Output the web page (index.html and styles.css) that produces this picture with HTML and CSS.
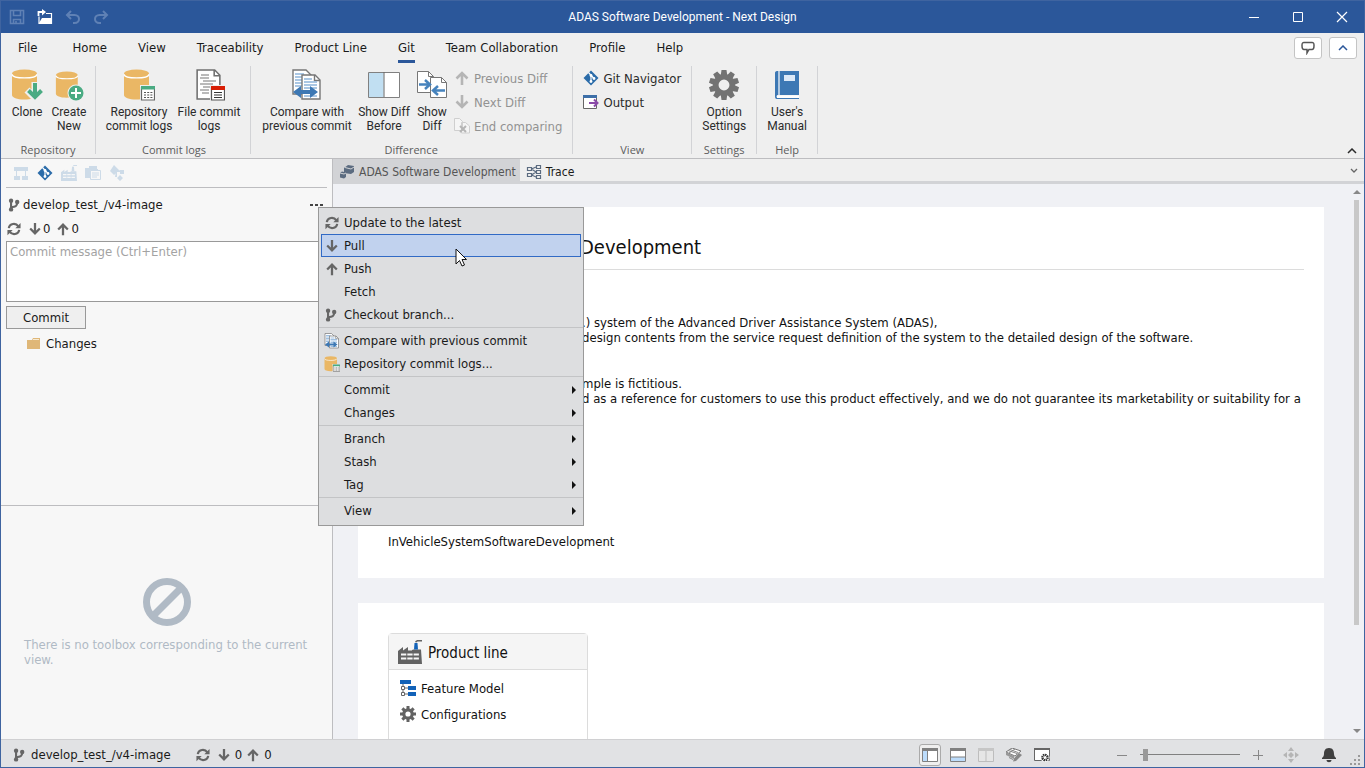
FILE: index.html
```html
<!DOCTYPE html>
<html lang="en">
<head>
<meta charset="utf-8">
<title>ADAS Software Development - Next Design</title>
<link rel="stylesheet" href="styles.css">
</head>
<body>
<svg class="defs" aria-hidden="true">
  <symbol id="db" viewBox="0 0 32 32"><path d="M1 6v20c0 2.500 5 4.500 12 4.500s13-2 13-4.500V6z" fill="#eab765"/><ellipse cx="13.500" cy="4.500" rx="12.500" ry="4" fill="#eab765"/><path d="M1 5.500C2 10 25 10 26 5.500" fill="none" stroke="#fff" stroke-width="1.300"/></symbol>
  <symbol id="page" viewBox="0 0 24 30"><path d="M1 1h17l5 5v23H1z" fill="#fff" stroke="#707070" stroke-width="1.500"/><path d="M17.500 1v5.500H23" fill="none" stroke="#707070" stroke-width="1.500"/></symbol>
  <symbol id="down" viewBox="0 0 16 16"><path d="M8 1v12M2.500 7.500L8 13l5.500-5.500" fill="none" stroke="currentColor" stroke-width="2.600"/></symbol>
  <symbol id="up" viewBox="0 0 16 16"><path d="M8 15V3M2.500 8.500L8 3l5.500 5.500" fill="none" stroke="currentColor" stroke-width="2.600"/></symbol>
  <symbol id="sync" viewBox="0 0 16 16"><path d="M2 7C3 1.500 10 .5 13 5M14 9C13 14.500 6 15.500 3 11" fill="none" stroke="currentColor" stroke-width="2.400"/><path d="M15.500 1v6h-6zM.5 15V9h6z" fill="currentColor"/></symbol>
  <symbol id="branch" viewBox="0 0 16 16"><path d="M3.500 3v10M3.500 10.500c5-.5 7-1 7-5.500" fill="none" stroke="currentColor" stroke-width="2.400"/><circle cx="3.500" cy="3" r="2.500" fill="currentColor"/><circle cx="3.500" cy="13" r="2.500" fill="currentColor"/><circle cx="10.500" cy="4.500" r="2.500" fill="currentColor"/></symbol>
  <symbol id="git" viewBox="0 0 16 16"><path d="M8 .5L15.500 8 8 15.500.5 8z" fill="#2b6ca9"/><path d="M5.500 2.500l5.500 6M8 5.500V12" stroke="#fff" stroke-width="1.200"/><circle cx="8" cy="5.500" r="1.400" fill="#fff"/><circle cx="8" cy="11.500" r="1.400" fill="#fff"/><circle cx="11" cy="8.500" r="1.400" fill="#fff"/></symbol>
  <symbol id="gear" viewBox="0 0 32 32"><g fill="currentColor"><path id="cog" d="M13.500 1h5l1 7h-7zM13.500 31h5l1-7h-7z"/><use href="#cog" transform="rotate(36 16 16)"/><use href="#cog" transform="rotate(72 16 16)"/><use href="#cog" transform="rotate(108 16 16)"/><use href="#cog" transform="rotate(144 16 16)"/></g><circle cx="16" cy="16" r="8.200" fill="none" stroke="currentColor" stroke-width="5.500"/></symbol>
  <symbol id="gear8" viewBox="0 0 16 16"><g fill="currentColor"><path id="tooth" d="M6.500 0h3v4h-3zM6.500 12h3v4h-3z"/><use href="#tooth" transform="rotate(45 8 8)"/><use href="#tooth" transform="rotate(90 8 8)"/><use href="#tooth" transform="rotate(135 8 8)"/></g><circle cx="8" cy="8" r="4.200" fill="none" stroke="currentColor" stroke-width="3.200"/></symbol>
  <symbol id="compare" viewBox="0 0 32 32"><path d="M2 1h13l5 5v19H2z" fill="#fff" stroke="#777" stroke-width="1.400"/><path d="M4 5h9M4 8h13M4 11h13M4 14h13M4 17h9" stroke="#8fb5dc" stroke-width="1.700"/><path d="M11 6h13l5 5v19H11z" fill="#fff" stroke="#777" stroke-width="1.400"/><path d="M23.500 6v5.500H29" fill="none" stroke="#777" stroke-width="1.400"/><path d="M13 10h8M13 13h13M13 16h13M13 19h13M13 27h13" stroke="#8fb5dc" stroke-width="1.700"/><path d="M2 23l8-6v4h9v-4l8 6-8 6v-4h-9v4z" fill="#3d78b4"/></symbol>
  <symbol id="repolog" viewBox="0 0 32 32"><use href="#db" width="32" height="32"/><path d="M17 16h15v16H17z" fill="#efefef"/><path d="M18.500 18.500h13V31h-13z" fill="#fff" stroke="#666" stroke-width="1.200"/><path d="M18 17h14v3.500H18z" fill="#4aab83"/><path d="M21 23.500h9M21 26h9M21 28.500h9" stroke="#555" stroke-width="1.200" stroke-dasharray="2 1.200"/></symbol>
  <symbol id="factory" viewBox="0 0 24 24"><path d="M0 11l5-4v3.500l5-3.500v3.500h4V10l1.500-.5H23l1 14.500H0z" fill="currentColor"/><path d="M3 14.500h18M3 18.500h18" stroke="#f7f7f7" stroke-width="2" stroke-dasharray="5.300 1"/><path d="M16 9.500l.5-6.500h3l.5 6.500z" class="chimney"/><path d="M17.500 2l2-1.300H24" fill="none" stroke="currentColor" stroke-width="1.500"/></symbol>
  <symbol id="chevron" viewBox="0 0 10 6"><path d="M1 5l4-4 4 4" fill="none" stroke="currentColor" stroke-width="1.500"/></symbol>
</svg>
<div class="window">
  <header class="titlebar">
    <div class="quick">
      <button aria-label="Save" class="dim"><svg viewBox="0 0 16 16"><path d="M1.500 1.500h13v13h-13zM4.500 1.500v5h7v-5M4.500 14.500v-4h7v4M7 12v2" fill="none" stroke="currentColor" stroke-width="1.600"/></svg></button>
      <button aria-label="Open"><svg viewBox="0 0 16 16"><path d="M2 7.500v7h12.500V4.500H9" fill="none" stroke="#fff" stroke-width="1.200"/><path d="M2 14l3-5h9.500v5.500H2z" fill="#fff"/><path d="M1.500 7V3H6" fill="none" stroke="#fff" stroke-width="1.800"/><path d="M5 0l4 3-4 3.500z" fill="#fff"/></svg></button>
      <button aria-label="Undo" class="dim"><svg viewBox="0 0 16 16"><path d="M6 2L2 6l4 4M2 6h7.500c6 0 6 8 0 8H8" fill="none" stroke="currentColor" stroke-width="2"/></svg></button>
      <button aria-label="Redo" class="dim"><svg viewBox="0 0 16 16"><path d="M10 2l4 4-4 4M14 6H6.500c-6 0-6 8 0 8H8" fill="none" stroke="currentColor" stroke-width="2"/></svg></button>
    </div>
    <h1>ADAS Software Development - Next Design</h1>
    <div class="sys">
      <button aria-label="Minimize"><svg viewBox="0 0 12 12"><path d="M1 6.500h10" stroke="#fff"/></svg></button>
      <button aria-label="Maximize"><svg viewBox="0 0 12 12"><path d="M1.500 1.500h9v9h-9z" fill="none" stroke="#fff"/></svg></button>
      <button aria-label="Close"><svg viewBox="0 0 12 12"><path d="M1 1l10 10M11 1L1 11" stroke="#fff" stroke-width="1.200"/></svg></button>
    </div>
  </header>

  <nav class="tabs">
    <a href="#" class="file">File</a><a href="#">Home</a><a href="#">View</a><a href="#">Traceability</a><a href="#">Product Line</a><a href="#" class="on">Git</a><a href="#">Team Collaboration</a><a href="#">Profile</a><a href="#">Help</a>
    <div class="tabtools">
      <button aria-label="Feedback"><svg width="14" height="14" viewBox="0 0 14 14"><path d="M3 1.500h8c2 0 2 1 2 3s0 4-2 4H8L6 12V8.500H3c-2 0-2-2-2-4s0-3 2-3z" fill="none" stroke="#555" stroke-width="1.500"/></svg></button>
      <button aria-label="Collapse ribbon" class="blue"><svg width="10" height="6"><use href="#chevron"/></svg></button>
    </div>
  </nav>

  <div class="ribbon">
    <section class="group g-repo">
      <div class="cmds">
        <button class="big"><svg viewBox="0 0 32 32"><use href="#db" width="32" height="32"/><path d="M24 13v16M16 21l8 8 8-8" fill="none" stroke="#efefef" stroke-width="7"/><path d="M24 14v15M17.500 21.500L24 28l6.500-6.500" fill="none" stroke="#4aab83" stroke-width="4"/></svg>Clone</button>
        <button class="big"><svg viewBox="0 0 32 32"><use href="#db" x="2" y="1" width="28" height="30"/><circle cx="23" cy="24" r="8.500" fill="#efefef"/><circle cx="23" cy="24" r="7.500" fill="#4aab83"/><path d="M23 19v10M18 24h10" stroke="#fff" stroke-width="2"/></svg>Create<br>New</button>
      </div>
      <h2>Repository</h2>
    </section>
    <section class="group g-logs">
      <div class="cmds">
        <button class="big w70"><svg viewBox="0 0 32 32"><use href="#repolog"/></svg>Repository<br>commit logs</button>
        <button class="big w70"><svg viewBox="0 0 32 32"><use href="#page" x="3" y="0" width="25" height="31"/><path d="M8 6h8M7 9h9M10 12h13M7 15h13M10 18h8M7 21h9M9 24h7" stroke="#777" stroke-width="1.200"/><path d="M17 16h15v16H17z" fill="#efefef"/><path d="M18.500 18h13v13h-13z" fill="#fff" stroke="#555" stroke-width="1.200"/><path d="M18 17h14v4H18z" fill="#d81e05"/><path d="M21 23.500h8M21 26h8M21 28.500h8" stroke="#333" stroke-width="1.200"/></svg>File commit<br>logs</button>
      </div>
      <h2>Commit logs</h2>
    </section>
    <section class="group g-diff">
      <div class="cmds">
        <button class="big w94"><svg viewBox="0 0 32 32"><use href="#compare"/></svg>Compare with<br>previous commit</button>
        <button class="big w60"><svg viewBox="0 0 32 32"><path d="M.5 3.500h31v25H.5z" fill="#fff" stroke="#808080"/><path d="M1 4h14.500v24H1z" fill="#c1dff2"/><path d="M16 3v25" stroke="#666"/></svg>Show Diff<br>Before</button>
        <button class="big w36"><svg viewBox="0 0 32 32"><path d="M1.500 2.500h11l5 5v16h-16z" fill="#fff" stroke="#777"/><path d="M12.500 2.500v5h5" fill="none" stroke="#777"/><path d="M14.500 8.500h11l5 5v15h-16z" fill="#fff" stroke="#777"/><path d="M25.500 8.500v5h5" fill="none" stroke="#777"/><path d="M3 15.500h10M9 11l5 4.500L9 20M29 21.500H18M22 17l-5 4.500 5 4.500" fill="none" stroke="#4683bd" stroke-width="2.500"/></svg>Show<br>Diff</button>
        <div class="smalls off">
          <button class="small"><svg viewBox="0 0 16 16"><use href="#up"/></svg>Previous Diff</button>
          <button class="small"><svg viewBox="0 0 16 16"><use href="#down"/></svg>Next Diff</button>
          <button class="small"><svg viewBox="0 0 16 16"><path d="M.5.5h5l3 3v9h-8zM7.500 4.500h4l4 3.500v7h-8z" fill="#f5f5f5" stroke="#cfcfcf"/><path d="M6 8l6 6M12 8l-6 6" stroke="currentColor" stroke-width="2"/></svg>End comparing</button>
        </div>
      </div>
      <h2>Difference</h2>
    </section>
    <section class="group g-view">
      <div class="cmds">
        <div class="smalls">
          <button class="small"><svg viewBox="0 0 16 16"><use href="#git"/></svg>Git Navigator</button>
          <button class="small"><svg viewBox="0 0 16 16"><path d="M.5 1.500h13v13H.5z" fill="#fff" stroke="#666"/><path d="M0 1h14v3H0z" fill="#3d6fa8"/><path d="M6 9h8M11 5.500L14.500 9 11 12.500" fill="none" stroke="#8a4aa8" stroke-width="2"/></svg>Output</button>
        </div>
      </div>
      <h2>View</h2>
    </section>
    <section class="group g-opt">
      <div class="cmds"><button class="big"><svg viewBox="0 0 32 32" class="grey"><use href="#gear"/></svg>Option<br>Settings</button></div>
      <h2>Settings</h2>
    </section>
    <section class="group g-help">
      <div class="cmds"><button class="big"><svg viewBox="0 0 32 32"><path d="M6 2h22v24H7c-2 0-2 3 0 3h21v1H6c-2 0-2-2-2-3V4c0-1 .5-2 2-2z" fill="#3d78b4"/><path d="M8 2v24" stroke="#fff" stroke-width="1.200"/><path d="M6 26.500h22v2.500H6z" fill="#fff"/><path d="M13 6h11v6H13z" fill="#dce9f7"/></svg>User's<br>Manual</button></div>
      <h2>Help</h2>
    </section>
    <button class="fold" aria-label="Fold"><svg width="10" height="6"><use href="#chevron"/></svg></button>
  </div>

  <main class="body">
    <aside class="side">
      <div class="git">
        <div class="sidebar-icons">
          <svg viewBox="0 0 16 16"><path d="M1 2h14v4H1zM1 11h6v4H1zM9 11h6v4H9zM3 6h1v5H3zM12 6h1v5h-1z" fill="#cddbe8"/></svg>
          <svg viewBox="0 0 16 16"><use href="#git"/></svg>
          <svg viewBox="0 0 16 16" class="pale"><use href="#factory"/></svg>
          <svg viewBox="0 0 16 16"><path d="M0 3h4V1h8v3h1v9H0z" fill="#cddbe8"/><path d="M5.500 5.500h10v9h-10z" fill="#f7f7f7" stroke="#cddbe8"/><path d="M7 8h7M7 10h7M7 12h5" stroke="#cddbe8"/></svg>
          <svg viewBox="0 0 16 16"><path d="M5 0l5 5-5 5-4-4zM11 5h4v4h-4zM11 10l3 3-3 3-3-3zM7 6l5-1v2H8v5H6z" fill="#cddbe8"/></svg>
        </div>
        <div class="branchrow"><svg viewBox="0 0 16 16"><use href="#branch"/></svg><span>develop_test_/v4-image</span><button class="more" aria-label="More"><svg viewBox="0 0 14 4"><path d="M0 1h3v2H0zM5 1h3v2H5zM10 1h3v2h-3z" fill="#444"/></svg></button></div>
        <div class="syncrow"><svg viewBox="0 0 16 16" class="sy"><use href="#sync"/></svg><svg viewBox="0 0 16 16"><use href="#down"/></svg><span>0</span><svg viewBox="0 0 16 16" class="gap"><use href="#up"/></svg><span>0</span></div>
        <textarea aria-label="Commit message" placeholder="Commit message (Ctrl+Enter)"></textarea>
        <button class="commit">Commit</button>
        <div class="changes"><svg viewBox="0 0 14 12"><path d="M0 2h5l1-2h7v11H0z" fill="#dfb778"/><path d="M6 1.500h6" stroke="#f7ead2"/></svg>Changes</div>
      </div>
      <div class="toolbox">
        <svg viewBox="0 0 48 48"><circle cx="24" cy="24" r="20.500" fill="none" stroke="#b0bac5" stroke-width="7"/><path d="M10 38L38 10" stroke="#b0bac5" stroke-width="7"/></svg>
        <p>There is no toolbox corresponding to the current view.</p>
      </div>
    </aside>

    <section class="editor">
      <div class="doctabs">
        <a href="#" class="on"><svg viewBox="0 0 16 16"><path d="M5 4l4-3 6 1v6l-3 2-7-1z" fill="#5b6b80"/><path d="M6 3.500l6 1.500 3-2" fill="none" stroke="#d2d3d6"/><path d="M1 9l2-1.500 4 1V13l-2 1.500-4-1z" fill="#5b6b80"/><path d="M1 9l4 1 2-1" fill="none" stroke="#d2d3d6"/></svg>ADAS Software Development</a>
        <a href="#"><svg viewBox="0 0 16 16"><path d="M1.500 3.500h4v3h-4zM1.500 9.500h4v3h-4zM10.500 1.500h4v3h-4zM10.500 6.500h4v3h-4zM10.500 11.500h4v3h-4zM5.500 5L10 3M5.500 5L10 8M5.500 11L10 8M5.500 11l4.500 2" fill="none" stroke="#5b6b80" stroke-width="1.200"/></svg>Trace</a>
        <button aria-label="Tab list"><svg width="8" height="5" viewBox="0 0 8 5"><path d="M1 1l3 3 3-3" fill="none" stroke="currentColor" stroke-width="1.300"/></svg></button>
      </div>
      <div class="view">
        <div class="pages">
          <article class="card intro">
            <h2>Development</h2>
            <p><span class="lead"></span>.) system of the Advanced Driver Assistance System (ADAS),<br><span class="lead"></span>design contents from the service request definition of the system to the detailed design of the software.</p>
            <p><span class="lead"></span>mple is fictitious.<br><span class="lead"></span>d as a reference for customers to use this product effectively, and we do not guarantee its marketability or suitability for a</p>
            <p class="name">InVehicleSystemSoftwareDevelopment</p>
          </article>
          <article class="card">
            <div class="tile">
              <h3><svg viewBox="0 0 24 24" class="plant"><use href="#factory"/></svg>Product line</h3>
              <a href="#"><svg viewBox="0 0 16 16"><path d="M0 0h11v4H0zM8 6h8v4H8zM8 12h8v4H8z" fill="#1262b8"/><path d="M1.500 6.500h3v3h-3zM1.500 12.500h3v3h-3zM3 4v2M5 8h3M5 14h3M3 10v2" fill="none" stroke="#666"/></svg>Feature Model</a>
              <a href="#"><svg viewBox="0 0 16 16" class="cfg"><use href="#gear8"/></svg>Configurations</a>
            </div>
          </article>
        </div>
        <div class="scroll"><svg viewBox="0 0 8 5"><path d="M0 5l4-4 4 4z" fill="#888"/></svg><i></i><svg viewBox="0 0 8 5"><path d="M0 0l4 4 4-4z" fill="#888"/></svg></div>
      </div>
    </section>

    <ul class="menu">
      <li><button><svg viewBox="0 0 16 16"><use href="#sync"/></svg>Update to the latest</button></li>
      <li><button class="hot"><svg viewBox="0 0 16 16"><use href="#down"/></svg>Pull</button></li>
      <li><button><svg viewBox="0 0 16 16"><use href="#up"/></svg>Push</button></li>
      <li><button><i></i>Fetch</button></li>
      <li><button><svg viewBox="0 0 16 16"><use href="#branch"/></svg>Checkout branch...</button></li>
      <li class="sep"></li>
      <li><button><svg class="wide" viewBox="0 0 32 32"><use href="#compare"/></svg>Compare with previous commit</button></li>
      <li><button><svg class="wide" viewBox="0 0 32 32"><use href="#repolog"/></svg>Repository commit logs...</button></li>
      <li class="sep"></li>
      <li><button class="sub"><i></i>Commit</button></li>
      <li><button class="sub"><i></i>Changes</button></li>
      <li class="sep"></li>
      <li><button class="sub"><i></i>Branch</button></li>
      <li><button class="sub"><i></i>Stash</button></li>
      <li><button class="sub"><i></i>Tag</button></li>
      <li class="sep"></li>
      <li><button class="sub"><i></i>View</button></li>
    </ul>
    <svg class="pointer" viewBox="0 0 12 19"><path d="M1 1v15l3.500-3.500L7 18l2.500-1L7 11.500h4.500z" fill="#fff" stroke="#111"/></svg>
  </main>

  <footer class="status">
    <svg viewBox="0 0 16 16" class="ic"><use href="#branch"/></svg><span>develop_test_/v4-image</span>
    <svg viewBox="0 0 16 16" class="ic far"><use href="#sync"/></svg>
    <svg viewBox="0 0 16 16" class="ic near"><use href="#down"/></svg><span>0</span>
    <svg viewBox="0 0 16 16" class="ic"><use href="#up"/></svg><span>0</span>
    <div class="right">
      <div class="panes">
        <button class="on" aria-label="Left pane"><svg viewBox="0 0 16 14"><path d="M.5.5h15v13H.5z" fill="#fff" stroke="#808080"/><path d="M1 3h4v10H1z" fill="#bcdcfb"/><path d="M0 0h16v3H0z" fill="#808080"/><path d="M5.500 3v10" stroke="#808080"/></svg></button>
        <button aria-label="Bottom pane"><svg viewBox="0 0 16 14"><path d="M.5.5h15v13H.5z" fill="#fff" stroke="#808080"/><path d="M1 9h14v4H1z" fill="#bcdcfb"/><path d="M0 0h16v3H0z" fill="#808080"/><path d="M1 9h14" stroke="#808080"/></svg></button>
        <button aria-label="Split pane"><svg viewBox="0 0 16 14"><path d="M.5.5h15v13H.5zM8 2v12" fill="#e6e6e6" stroke="#bdbdbd"/><path d="M0 0h16v3H0z" fill="#c6c6c6"/></svg></button>
        <button aria-label="Edit model"><svg viewBox="0 0 16 14"><path d="M0 4l6-4 9 3-6 5z" fill="#fff" stroke="#777"/><path d="M2 2.500l9 3M4 1.500l8 3M3 5l6-4" stroke="#888"/><path d="M0 4l8 4v3L0 7z" fill="#999"/><path d="M3 9.500l4 2" stroke="#888"/><path d="M7 13.500l1-3 5-5.500 3 2-6 6z" fill="#888"/></svg></button>
        <button aria-label="View settings"><svg viewBox="0 0 16 14"><path d="M.5.5h15v12H.5z" fill="#fff" stroke="#666"/><path d="M0 0h16v2H0z" fill="#666"/><circle cx="11" cy="9.500" r="4.500" fill="#fff"/><circle cx="11" cy="9.500" r="2.600" fill="none" stroke="#333" stroke-width="2.400" stroke-dasharray="1.400 .6"/></svg></button>
      </div>
      <button class="zoomer" aria-label="Zoom out"><svg viewBox="0 0 10 10"><path d="M0 5.500h10" stroke="#888"/></svg></button>
      <input type="range" aria-label="Zoom" min="0" max="100" value="3">
      <button class="zoomer" aria-label="Zoom in"><svg viewBox="0 0 10 10"><path d="M0 5.500h10M5.500 0v10" stroke="#888"/></svg></button>
      <svg class="move" viewBox="0 0 16 16"><path d="M8 0l3 4H5zM8 16l3-4H5zM0 8l4-3v6zM16 8l-4-3v6zM8 5l3 3-3 3-3-3z" fill="#b5b5b5"/></svg>
      <svg class="bell" viewBox="0 0 16 16"><path d="M8 1c4 0 5 3 5 6 0 2 1 3 2 4v1H1v-1c1-1 2-2 2-4 0-3 1-6 5-6zM5.500 13h5c0 3-5 3-5 0z" fill="#3f3f3f"/></svg>
      <svg class="grip" viewBox="0 0 12 12"><path d="M9 1h2v2H9zM5 5h2v2H5zM9 5h2v2H9zM1 9h2v2H1zM5 9h2v2H5zM9 9h2v2H9z" fill="#999"/></svg>
    </div>
  </footer>
</div>
</body>
</html>
```
FILE: styles.css
```css
* { box-sizing: border-box; }
body { margin: 0; font: 13px/15px "DejaVu Sans Condensed", "DejaVu Sans", sans-serif; color: #1a1a1a; }
h1, h2, h3, p, ul { margin: 0; padding: 0; font-weight: normal; }
ul { list-style: none; }
button { border: 0; padding: 0; margin: 0; background: none; font: inherit; color: inherit; }
a { color: inherit; text-decoration: none; }
svg { flex: none; display: block; }
.defs { position: absolute; width: 0; height: 0; }

.window { height: 100vh; display: flex; flex-direction: column; border: 1px solid #3f64a0; background: #efefef; overflow: hidden; }

.titlebar { height: 32px; flex: none; background: #2b579a; color: #fff; display: grid; grid-template-columns: 1fr auto 1fr; align-items: center; }
.titlebar h1 { font: 12px/16px Roboto, sans-serif; }
.quick { display: flex; gap: 12px; padding-left: 8px; }
.quick svg { width: 16px; height: 16px; }
.dim { color: #5f81b5; }
.sys { display: flex; justify-content: flex-end; gap: 32px; padding-right: 16px; }
.sys svg { width: 12px; height: 12px; }

.tabs { flex: none; height: 30px; display: flex; gap: 31px; padding-left: 17px; }
.tabs a { line-height: 29px; }
.tabs .file { padding-right: 4px; }
.tabs .on { border-bottom: 3px solid #2b579a; }
.tabtools { margin-left: auto; padding: 4px 7px 0 0; display: flex; gap: 7px; }
.tabtools button { width: 28px; height: 22px; background: #fff; border: 1px solid #c4c4c4; border-radius: 3px; display: flex; align-items: center; justify-content: center; }
.blue { color: #2b579a; }

.ribbon { flex: none; height: 96px; display: flex; border-bottom: 1px solid #bdbdc0; padding: 3px 0; color: #2b2b2b; }
.group { display: flex; flex-direction: column; justify-content: space-between; border-right: 1px solid #d2d3d6; height: 88px; }
.group h2 { font: 11px/14px "Open Sans", sans-serif; color: #5c5c5c; text-align: center; margin-bottom: -3px; }
.cmds { display: flex; align-items: flex-start; }
.big { font: 12px/14px Roboto, sans-serif; text-align: center; min-width: 42px; padding-top: 3px; white-space: nowrap; }
.big svg { width: 32px; height: 32px; margin: 0 auto 4px; }
.w70 { width: 70px; }
.w94 { width: 94px; }
.w60 { width: 60px; }
.w36 { width: 36px; min-width: 36px; }
.grey { color: #737373; }
.g-repo { padding: 0 5px; }
.g-logs { padding: 0 6px 0 8px; }
.g-diff { padding: 0 10px 0 9px; }
.g-view { padding: 0 10px; }
.g-opt { padding: 0 10px; }
.g-help { padding: 0 9px; }
.smalls { display: flex; flex-direction: column; padding-left: 4px; }
.g-view .smalls { padding-left: 0; }
.small { height: 24px; display: flex; align-items: center; gap: 4px; white-space: nowrap; }
.small svg { width: 16px; height: 16px; }
.off { color: #929292; }
.off svg { color: #b5b5b5; }
.fold { margin: auto 7px 1px auto; }

.body { flex: 1; min-height: 0; display: flex; position: relative; }
.side { width: 332px; flex: none; background: #f7f7f7; border-right: 1px solid #bdbdc0; display: flex; flex-direction: column; }
.git { padding: 0 5px; flex: 1; }
.sidebar-icons { height: 29px; border-bottom: 1px solid #bdbdc0; display: flex; align-items: center; gap: 8px; padding-left: 7px; }
.sidebar-icons svg { width: 16px; height: 16px; }
.pale { color: #cddbe8; fill: #cddbe8; }
.branchrow { display: flex; align-items: center; height: 33px; gap: 1px; }
.branchrow svg, .syncrow svg { width: 14px; height: 14px; color: #666; }
.branchrow svg { margin-left: 2px; }
.branchrow .more { margin: 0 3px 0 auto; }
.branchrow .more svg { height: 4px; margin: 0; }
.syncrow { display: flex; align-items: center; height: 15px; gap: 1px; }
.syncrow .sy { margin: 0 6px 0 1px; }
.syncrow .gap { margin-left: 5px; }
textarea { display: block; width: 100%; height: 61px; margin: 5px 0 4px; border: 1px solid #999; background: #fff; font: inherit; padding: 2px 3px; resize: none; border-radius: 0; }
textarea::placeholder { color: #a3a3a3; }
.commit { width: 80px; height: 23px; border: 1px solid #999; background: #efefef; }
.changes { display: flex; align-items: center; gap: 5px; height: 29px; padding-left: 21px; }
.changes svg { width: 14px; height: 12px; }
.toolbox { height: 234px; flex: none; border-top: 1px solid #bdbdc0; padding: 72px 23px 0; color: #b0bac5; }
.toolbox svg { width: 48px; height: 48px; margin: 0 auto 11px; }

.editor { flex: 1; min-width: 0; display: flex; flex-direction: column; background: #f0f1f5; }
.doctabs { height: 25px; flex: none; border-bottom: 3px solid #d2d3d6; background: #efefef; display: flex; font-size: 12px; }
.doctabs a { display: flex; align-items: center; gap: 4px; padding: 4px 4px 0 6px; }
.doctabs .on { background: #d2d3d6; color: #555; }
.doctabs svg { width: 16px; height: 16px; }
.doctabs button { margin-left: auto; padding-right: 6px; color: #666; }
.doctabs button svg { width: 8px; height: 5px; }
.view { flex: 1; min-height: 0; display: flex; }
.pages { flex: 1; min-width: 0; overflow: hidden; padding: 23px 25px 0; display: flex; flex-direction: column; gap: 25px; }
.card { background: #fff; padding: 24px 20px 29px 30px; flex: none; white-space: nowrap; color: #111; }
.card h2 { font-size: 20px; line-height: 32px; padding: 0 0 6px 192px; border-bottom: 1px solid #dcdcdc; margin-bottom: 45px; }
.card p + p { margin-top: 31px; }
.lead { display: inline-block; width: 194px; }
.card p.name { margin-top: 128px; }
.card + .card { padding-top: 30px; }
.tile { width: 200px; height: 200px; border: 1px solid #dcdcdc; border-radius: 4px; }
.tile h3 { font-size: 15px; line-height: 18px; height: 36px; background: #f5f5f5; border-bottom: 1px solid #dcdcdc; display: flex; align-items: center; gap: 6px; padding: 3px 9px 0; margin-bottom: 5px; }
.plant { width: 24px; height: 24px; color: #636363; fill: #1262b8; margin-bottom: 2px; }
.tile a { display: flex; align-items: center; gap: 5px; height: 26px; padding-left: 11px; }
.tile a svg { width: 16px; height: 16px; }
.cfg { color: #636363; }
.scroll { width: 15px; flex: none; display: flex; flex-direction: column; align-items: center; padding: 5px 0 5px; }
.scroll svg { width: 8px; height: 5px; }
.scroll i { width: 5px; flex: 0 0 78%; background: #c8c8c8; margin: 6px 0 auto; }

.menu { position: absolute; left: 317px; top: 48px; width: 266px; background: #dddee0; border: 1px solid #999; padding: 3px 2px; }
.menu button { display: flex; align-items: center; gap: 5px; width: 100%; height: 23px; padding: 0 4px 0 3px; border: 1px solid transparent; }
.menu svg, .menu i { width: 14px; height: 14px; color: #666; }
.menu .wide { width: 16px; height: 16px; margin: 0 -1px; }
.menu .hot { background: #c1d2ee; border-color: #316ac5; }
.menu .sub::after { content: ""; margin-left: auto; border: 4px solid transparent; border-left-color: #111; border-right: 0; }
.sep { height: 3px; border-bottom: 1px solid #c3c4c6; margin: -1px -2px 1px; }
.pointer { position: absolute; left: 454px; top: 89px; width: 12px; height: 19px; }

.status { height: 28px; flex: none; background: #e1e2e4; border-top: 1px solid #d0d0d2; display: flex; align-items: center; gap: 4px; padding: 2px 0 0 12px; }
.status .ic { width: 14px; height: 14px; color: #666; }
.status .far { margin-left: 21px; }
.status .near { margin-left: 3px; }
.right { margin-left: auto; display: flex; align-items: center; padding-right: 3px; }
.panes { display: flex; gap: 4px; margin-right: 63px; }
.panes button { width: 24px; height: 22px; display: flex; align-items: center; justify-content: center; }
.panes .on { border: 1px solid #aaa; border-radius: 3px; background: #efefef; width: 22px; margin-right: 1px; }
.panes svg { width: 16px; height: 14px; }
.zoomer svg { width: 10px; height: 10px; }
input[type="range"] { -webkit-appearance: none; appearance: none; width: 100px; height: 12px; margin: 0 13px; background: linear-gradient(#808080, #808080) center / 100% 1px no-repeat; }
input[type="range"]::-webkit-slider-thumb { -webkit-appearance: none; appearance: none; width: 5px; height: 12px; background: #999; }
.move { width: 16px; height: 16px; margin-left: 20px; }
.bell { width: 16px; height: 16px; margin: 0 12px 0 22px; }
.grip { width: 12px; height: 12px; align-self: flex-end; }
```
